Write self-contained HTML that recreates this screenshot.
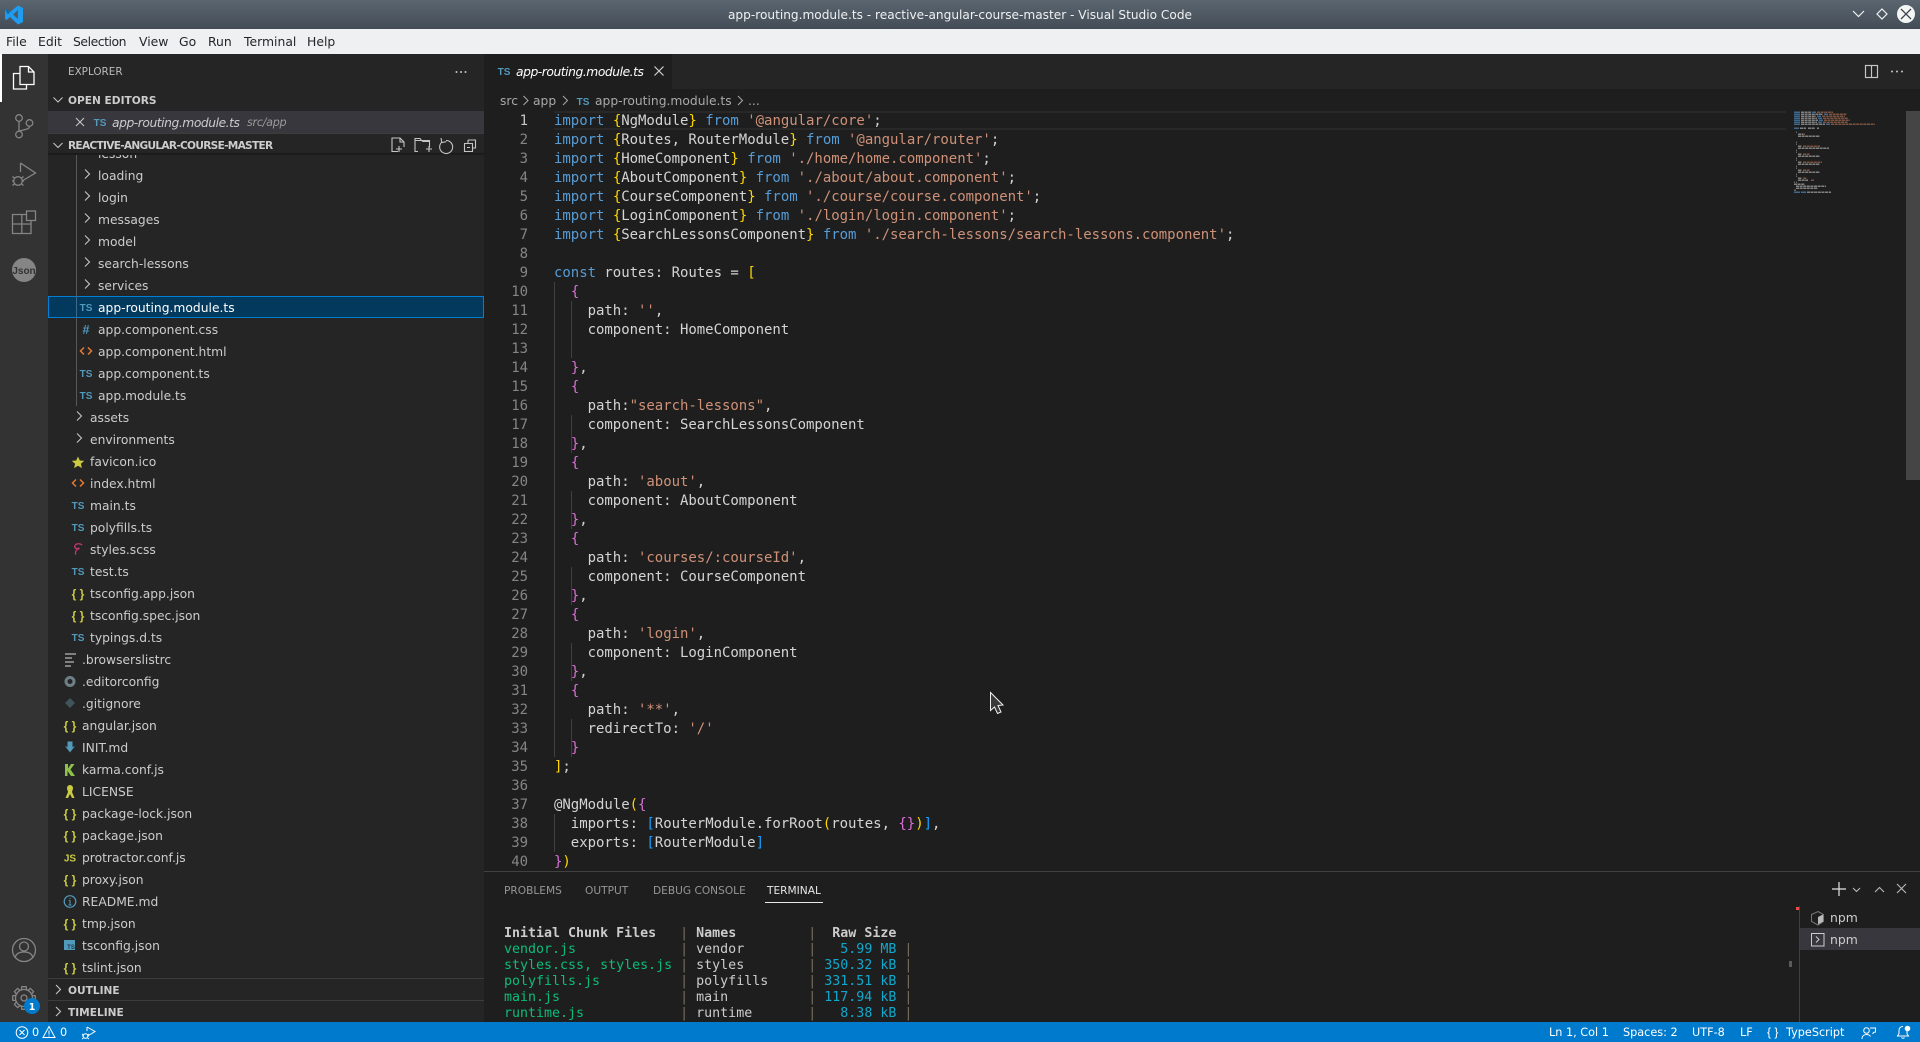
<!DOCTYPE html>
<html lang="en">
<head>
<meta charset="utf-8">
<title>app-routing.module.ts - reactive-angular-course-master - Visual Studio Code</title>
<style>
html,body{margin:0;padding:0;width:1920px;height:1042px;overflow:hidden;background:#1e1e1e}
body{font-family:"DejaVu Sans","Liberation Sans",sans-serif;position:relative;color:#ccc}
div,pre{box-sizing:border-box}
.a{position:absolute}
.t{position:absolute;white-space:nowrap}
#title{left:0;top:0;width:1920px;height:29px;background:linear-gradient(#5a6570,#444d56)}
#tt{left:0;width:1920px;top:1px;text-align:center;line-height:29px;font-size:12.15px;color:#eff0f1}
#menu{left:0;top:29px;width:1920px;height:25px;background:#eff0f1}
.m{top:29px;line-height:25px;font-size:12.4px;color:#232629}
#act{left:0;top:54px;width:48px;height:968px;background:#333}
#side{left:48px;top:54px;width:436px;height:968px;background:#252526}
.h{font-size:10.6px;font-weight:bold;color:#ccc;left:68px;line-height:20px}
#list{left:48px;top:155px;width:436px;height:823px;overflow:hidden}
.r{position:absolute;white-space:nowrap;font-size:12.3px;line-height:22px;height:22px;color:#ccc}
.d3{left:50px}.d2{left:42px}.d1{left:34px}
pre{margin:0;position:absolute}
#code,#nums{font-family:"DejaVu Sans Mono","Liberation Mono",monospace;font-size:14px;line-height:19px;letter-spacing:-.03px;color:#d4d4d4}
#code{left:554px;top:112px;height:759px;overflow:hidden;width:1000px}
#nums{left:488px;width:40px;top:112px;height:759px;overflow:hidden;text-align:right;color:#858585}
.k{color:#569cd6}.s{color:#ce9178}.g{color:#ffd700}.o{color:#da70d6}.b{color:#179fff}
#term{left:504px;top:926px;height:96px;overflow:hidden;font-family:"DejaVu Sans Mono","Liberation Mono",monospace;font-size:13.3px;line-height:16px;color:#ccc}
.gr{color:#0dbc79}.cy{color:#11a8cd}.p{color:#77705f}
.pt{top:881px;line-height:20px;font-size:10.6px;color:#969696}
.st{top:1023px;line-height:19px;font-size:11.25px;color:#fff}
.bc{top:91px;line-height:20px;font-size:12.3px;color:#a9a9a9}
</style>
</head>
<body>
<div class="a" id="title"></div>
<div class="t" id="tt">app-routing.module.ts - reactive-angular-course-master - Visual Studio Code</div>
<div class="a" id="menu"></div>
<div class="t m" style="left:6px">File</div>
<div class="t m" style="left:38px">Edit</div>
<div class="t m" style="left:73px;letter-spacing:-.45px">Selection</div>
<div class="t m" style="left:139px">View</div>
<div class="t m" style="left:179px">Go</div>
<div class="t m" style="left:208px">Run</div>
<div class="t m" style="left:244px">Terminal</div>
<div class="t m" style="left:307px">Help</div>

<div class="a" id="act"></div>
<div class="a" style="left:0;top:54px;width:2px;height:48px;background:#fff"></div>
<div class="a" id="side"></div>
<!-- tab bar -->
<div class="a" style="left:484px;top:54px;width:1436px;height:35px;background:#252526"></div>
<div class="a" style="left:484px;top:54px;width:188px;height:35px;background:#1e1e1e"></div>
<!-- current line highlight -->
<div class="a" style="left:554px;top:111px;width:1232px;height:19px;border:2px solid #282828;border-left:0;border-right:0"></div>
<div class="a" style="left:1906px;top:111px;width:14px;height:369px;background:#454545"></div>

<div class="t" style="left:68px;top:62px;line-height:20px;font-size:10.4px;color:#bbb">EXPLORER</div>
<div class="t h" style="top:91px">OPEN EDITORS</div>
<div class="a" style="left:48px;top:111px;width:436px;height:22px;background:#37373d"></div>
<div class="t" style="left:112px;top:112px;line-height:22px;font-size:12.3px;font-style:italic;letter-spacing:-.45px;color:#ccc">app-routing.module.ts</div>
<div class="t" style="left:247px;top:112px;line-height:22px;font-size:11.2px;font-style:italic;letter-spacing:-.3px;color:#9a9a9a">src/app</div>
<div class="a" style="left:48px;top:133px;width:436px;height:1px;background:#3c3c3c"></div>
<div class="t h" style="top:136px;letter-spacing:-.72px">REACTIVE-ANGULAR-COURSE-MASTER</div>

<div class="a" id="list">
<div class="a" style="left:28px;top:0;width:1px;height:251px;background:#585858"></div>
<div class="r d3" style="top:-12px">lesson</div>
<div class="r d3" style="top:10px">loading</div>
<div class="r d3" style="top:32px">login</div>
<div class="r d3" style="top:54px">messages</div>
<div class="r d3" style="top:76px">model</div>
<div class="r d3" style="top:98px">search-lessons</div>
<div class="r d3" style="top:120px">services</div>
<div class="a" style="left:0;top:141px;width:436px;height:22px;background:#04395e;border:1px solid #007fd4"></div>
<div class="a" style="left:28px;top:141px;width:1px;height:22px;background:#3b6a8a"></div>
<div class="r d3" style="top:142px;color:#fff">app-routing.module.ts</div>
<div class="r d3" style="top:164px">app.component.css</div>
<div class="r d3" style="top:186px">app.component.html</div>
<div class="r d3" style="top:208px">app.component.ts</div>
<div class="r d3" style="top:230px">app.module.ts</div>
<div class="r d2" style="top:252px">assets</div>
<div class="r d2" style="top:274px">environments</div>
<div class="r d2" style="top:296px">favicon.ico</div>
<div class="r d2" style="top:318px">index.html</div>
<div class="r d2" style="top:340px">main.ts</div>
<div class="r d2" style="top:362px">polyfills.ts</div>
<div class="r d2" style="top:384px">styles.scss</div>
<div class="r d2" style="top:406px">test.ts</div>
<div class="r d2" style="top:428px">tsconfig.app.json</div>
<div class="r d2" style="top:450px">tsconfig.spec.json</div>
<div class="r d2" style="top:472px">typings.d.ts</div>
<div class="r d1" style="top:494px">.browserslistrc</div>
<div class="r d1" style="top:516px">.editorconfig</div>
<div class="r d1" style="top:538px">.gitignore</div>
<div class="r d1" style="top:560px">angular.json</div>
<div class="r d1" style="top:582px">INIT.md</div>
<div class="r d1" style="top:604px">karma.conf.js</div>
<div class="r d1" style="top:626px">LICENSE</div>
<div class="r d1" style="top:648px">package-lock.json</div>
<div class="r d1" style="top:670px">package.json</div>
<div class="r d1" style="top:692px">protractor.conf.js</div>
<div class="r d1" style="top:714px">proxy.json</div>
<div class="r d1" style="top:736px">README.md</div>
<div class="r d1" style="top:758px">tmp.json</div>
<div class="r d1" style="top:780px">tsconfig.json</div>
<div class="r d1" style="top:802px">tslint.json</div>
</div>
<div class="a" style="left:48px;top:153px;width:436px;height:3px;background:linear-gradient(#00000066,#00000000)"></div>

<div class="a" style="left:48px;top:978px;width:436px;height:1px;background:#3c3c3c"></div>
<div class="t h" style="top:981px">OUTLINE</div>
<div class="a" style="left:48px;top:1000px;width:436px;height:1px;background:#3c3c3c"></div>
<div class="t h" style="top:1003px">TIMELINE</div>

<!-- tab + breadcrumbs -->
<div class="t" style="left:516px;top:62px;line-height:20px;font-size:12.3px;font-style:italic;letter-spacing:-.45px;color:#fff">app-routing.module.ts</div>
<div class="t bc" style="left:500px">src</div>
<div class="t bc" style="left:533px">app</div>
<div class="t bc" style="left:595px">app-routing.module.ts</div>
<div class="t bc" style="left:748px">...</div>

<pre id="nums"><span style="color:#c6c6c6">1</span>
2
3
4
5
6
7
8
9
10
11
12
13
14
15
16
17
18
19
20
21
22
23
24
25
26
27
28
29
30
31
32
33
34
35
36
37
38
39
40</pre>
<pre id="code"><span class="k">import</span> <span class="g">{</span>NgModule<span class="g">}</span> <span class="k">from</span> <span class="s">'@angular/core'</span>;
<span class="k">import</span> <span class="g">{</span>Routes, RouterModule<span class="g">}</span> <span class="k">from</span> <span class="s">'@angular/router'</span>;
<span class="k">import</span> <span class="g">{</span>HomeComponent<span class="g">}</span> <span class="k">from</span> <span class="s">'./home/home.component'</span>;
<span class="k">import</span> <span class="g">{</span>AboutComponent<span class="g">}</span> <span class="k">from</span> <span class="s">'./about/about.component'</span>;
<span class="k">import</span> <span class="g">{</span>CourseComponent<span class="g">}</span> <span class="k">from</span> <span class="s">'./course/course.component'</span>;
<span class="k">import</span> <span class="g">{</span>LoginComponent<span class="g">}</span> <span class="k">from</span> <span class="s">'./login/login.component'</span>;
<span class="k">import</span> <span class="g">{</span>SearchLessonsComponent<span class="g">}</span> <span class="k">from</span> <span class="s">'./search-lessons/search-lessons.component'</span>;

<span class="k">const</span> routes: Routes = <span class="g">[</span>
  <span class="o">{</span>
    path: <span class="s">''</span>,
    component: HomeComponent

  <span class="o">}</span>,
  <span class="o">{</span>
    path:<span class="s">"search-lessons"</span>,
    component: SearchLessonsComponent
  <span class="o">}</span>,
  <span class="o">{</span>
    path: <span class="s">'about'</span>,
    component: AboutComponent
  <span class="o">}</span>,
  <span class="o">{</span>
    path: <span class="s">'courses/:courseId'</span>,
    component: CourseComponent
  <span class="o">}</span>,
  <span class="o">{</span>
    path: <span class="s">'login'</span>,
    component: LoginComponent
  <span class="o">}</span>,
  <span class="o">{</span>
    path: <span class="s">'**'</span>,
    redirectTo: <span class="s">'/'</span>
  <span class="o">}</span>
<span class="g">]</span>;

@NgModule<span class="g">(</span><span class="o">{</span>
  imports: <span class="b">[</span>RouterModule.forRoot<span class="g">(</span>routes, <span class="o">{}</span><span class="g">)</span><span class="b">]</span>,
  exports: <span class="b">[</span>RouterModule<span class="b">]</span>
<span class="o">}</span><span class="g">)</span></pre>

<!-- panel -->
<div class="a" style="left:484px;top:871px;width:1436px;height:151px;background:#1e1e1e;border-top:1px solid #414141"></div>
<div class="t pt" style="left:504px">PROBLEMS</div>
<div class="t pt" style="left:585px">OUTPUT</div>
<div class="t pt" style="left:653px">DEBUG CONSOLE</div>
<div class="t pt" style="left:767px;color:#e7e7e7">TERMINAL</div>
<div class="a" style="left:765px;top:902px;width:58px;height:1px;background:#e7e7e7"></div>
<pre id="term" class="a"><b>Initial Chunk Files</b>   <span class="p">|</span> <b>Names</b>         <span class="p">|</span>  <b>Raw Size</b>
<span class="gr">vendor.js</span>             <span class="p">|</span> vendor        <span class="p">|</span>   <span class="cy">5.99 MB</span> <span class="p">|</span>
<span class="gr">styles.css, styles.js</span> <span class="p">|</span> styles        <span class="p">|</span> <span class="cy">350.32 kB</span> <span class="p">|</span>
<span class="gr">polyfills.js</span>          <span class="p">|</span> polyfills     <span class="p">|</span> <span class="cy">331.51 kB</span> <span class="p">|</span>
<span class="gr">main.js</span>               <span class="p">|</span> main          <span class="p">|</span> <span class="cy">117.94 kB</span> <span class="p">|</span>
<span class="gr">runtime.js</span>            <span class="p">|</span> runtime       <span class="p">|</span>   <span class="cy">8.38 kB</span> <span class="p">|</span></pre>
<div class="a" style="left:1799px;top:906px;width:1px;height:116px;background:#414141"></div>
<div class="a" style="left:1800px;top:928px;width:120px;height:22px;background:#37373d"></div>
<div class="a" style="left:1796px;top:907px;width:3px;height:3px;background:#f14c4c"></div>
<div class="a" style="left:1789px;top:961px;width:3px;height:6px;background:#5a5a5a"></div>
<div class="t" style="left:1830px;top:907px;line-height:22px;font-size:12.4px;color:#ccc">npm</div>
<div class="t" style="left:1830px;top:929px;line-height:22px;font-size:12.4px;color:#ccc">npm</div>

<!-- status bar -->
<div class="a" style="left:0;top:1022px;width:1920px;height:20px;background:#007acc"></div>
<div class="t st" style="left:32px">0</div>
<div class="t st" style="left:60px">0</div>
<div class="t st" style="left:1549px">Ln 1, Col 1</div>
<div class="t st" style="left:1623px">Spaces: 2</div>
<div class="t st" style="left:1692px">UTF-8</div>
<div class="t st" style="left:1740px">LF</div>
<div class="t st" style="left:1767px;font-family:'Liberation Sans',sans-serif;font-size:12px">{ }</div>
<div class="t st" style="left:1786px">TypeScript</div>

<!-- icons overlay -->
<svg class="a" style="left:0;top:0;pointer-events:none" width="1920" height="1042" viewBox="0 0 1920 1042" xmlns="http://www.w3.org/2000/svg" fill="none">
<!-- vscode logo -->
<path d="M18 5.500L23 8v14l-5 2.500L10 17l-3.500 3L5 19v-9l1.500-1L10 12z" fill="#1f9cf0"/>
<path d="M18 10v9l-5-4.500z" fill="#4f5a64"/>
<path d="M5 10l1.500-1 3.500 3-2 2.500z" fill="#0a6fb5"/>
<!-- window buttons -->
<path d="M1853 11l5.500 5.500 5.500-5.500" stroke="#eff0f1" stroke-width="1.200"/>
<path d="M1882 9l5 5-5 5-5-5z" stroke="#eff0f1" stroke-width="1.200"/>
<circle cx="1906" cy="14" r="9" fill="#f4f5f5"/>
<path d="M1901 9l10 10M1911 9l-10 10" stroke="#3a424a" stroke-width="1.300"/>

<!-- activity icons -->
<g stroke="#fff" stroke-width="1.300">
<path d="M20 73.500h-6.500v15.500h13v-4.500"/>
<path d="M20 66.500h8.500l5.500 5.500v12.500h-14z"/>
<path d="M28.500 66.500v5.500h5.500"/>
</g>
<g stroke="#858585" stroke-width="1.300">
<circle cx="19" cy="118" r="3.300"/><circle cx="19" cy="134.500" r="3.300"/><circle cx="29.500" cy="123" r="3.300"/>
<path d="M19 121.300v9.900M29.500 126.300c0 3.500-6 3-10.500 5"/>
<path d="M20.500 163l15 10-13.500 8M20.500 163v9"/>
<circle cx="18" cy="181" r="4.300"/>
<path d="M12.500 176.500l2.500 2M23.500 176.500l-2.500 2M12 181h2M22 181h2M12.500 185.500l2.500-2M23.500 185.500l-2.500-2"/>
<path d="M12.500 214.500h18.500v19h-18.500zM12.500 224h18.500M21.800 214.500v19"/>
<rect x="26.500" y="211" width="9" height="9.500" fill="#333"/>
<circle cx="24" cy="950" r="11.500"/>
<circle cx="24" cy="946.500" r="4.500"/>
<path d="M15 958c1-5 5-6 9-6s8 1 9 6"/>
<g transform="translate(24 998)">
<circle r="8.500"/>
<circle r="3"/>
<path d="M8.100 -2.600L11.300 -2.200V2.200L8.100 2.600"/>
<path d="M8.100 -2.600L11.300 -2.200V2.200L8.100 2.600" transform="rotate(45)"/>
<path d="M8.100 -2.600L11.300 -2.200V2.200L8.100 2.600" transform="rotate(90)"/>
<path d="M8.100 -2.600L11.300 -2.200V2.200L8.100 2.600" transform="rotate(135)"/>
<path d="M8.100 -2.600L11.300 -2.200V2.200L8.100 2.600" transform="rotate(180)"/>
<path d="M8.100 -2.600L11.300 -2.200V2.200L8.100 2.600" transform="rotate(225)"/>
<path d="M8.100 -2.600L11.300 -2.200V2.200L8.100 2.600" transform="rotate(270)"/>
<path d="M8.100 -2.600L11.300 -2.200V2.200L8.100 2.600" transform="rotate(315)"/>
</g>
</g>
<circle cx="24" cy="270" r="12" fill="#858585"/>
<text x="24" y="274" text-anchor="middle" font-family="Liberation Sans,sans-serif" font-size="10" font-weight="bold" fill="#333">Json</text>
<circle cx="32" cy="1006" r="8" fill="#007acc"/>
<text x="32" y="1010" text-anchor="middle" font-family="DejaVu Sans,sans-serif" font-size="9.500" font-weight="bold" fill="#fff">1</text>

<!-- explorer dots + chevrons -->
<g fill="#c5c5c5"><circle cx="456.500" cy="72" r="1"/><circle cx="461" cy="72" r="1"/><circle cx="465.500" cy="72" r="1"/></g>
<g stroke="#c5c5c5" stroke-width="1.100">
<path d="M53.500 97.500l4.500 4.500 4.500-4.500M53.500 143l4.500 4.500 4.500-4.500"/>
<path d="M76 118l8 8M84 118l-8 8"/>
<path d="M56 985l4.500 4.500-4.500 4.500M56 1007l4.500 4.500-4.500 4.500"/>
<!-- toolbar -->
<path d="M398 151.500h-6v-13.500h8l4 4v5M400 138v4h4M402 149h-6M399 146v6"/>
<path d="M418 151.500h-3v-13h5l1.500 2h8v7M415 140.500h6.500l1.500 1h6.500M426 149h6M429 146v6"/>
<path d="M442 142a6.500 6.500 0 1 0 4-1.500M441 138l.8 4.500 4.500-.8"/>
<path d="M468 140h7.500v8h-3M464.500 143.500h8v8h-8zM467 147.500h3M468 143.500v-3.500"/>
<!-- folder chevrons -->
<path d="M85 169.500l4.500 4.500-4.500 4.500M85 191.500l4.500 4.500-4.500 4.500M85 213.500l4.500 4.500-4.500 4.500M85 235.500l4.500 4.500-4.500 4.500M85 257.500l4.500 4.500-4.500 4.500M85 279.500l4.500 4.500-4.500 4.500M77 411.500l4.500 4.500-4.500 4.500M77 433.500l4.500 4.500-4.500 4.500"/>
</g>

<!-- file icons -->
<g font-family="Liberation Sans,sans-serif" font-weight="bold" font-size="10" fill="#519aba" text-anchor="middle">
<text x="100" y="126">TS</text>
<text x="86" y="311">TS</text>
<text x="86" y="377">TS</text>
<text x="86" y="399">TS</text>
<text x="78" y="509">TS</text>
<text x="78" y="531">TS</text>
<text x="78" y="575">TS</text>
<text x="78" y="641">TS</text>
<text x="504" y="75">TS</text>
<text x="583" y="105">TS</text>
<text x="86" y="334" font-size="12.500">#</text>
</g>
<g font-family="Liberation Sans,sans-serif" font-weight="bold" font-size="12" fill="#cbcb41" text-anchor="middle">
<text x="78" y="598">{ }</text>
<text x="78" y="620">{ }</text>
<text x="70" y="730">{ }</text>
<text x="70" y="818">{ }</text>
<text x="70" y="840">{ }</text>
<text x="70" y="884">{ }</text>
<text x="70" y="928">{ }</text>
<text x="70" y="972">{ }</text>
</g>
<text x="70" y="861.500" font-family="Liberation Sans,sans-serif" font-weight="bold" font-size="10" fill="#cbcb41" text-anchor="middle">JS</text>
<g stroke="#e37933" stroke-width="1.500">
<path d="M84 347.500l-3.500 3.500 3.500 3.500M88 347.500l3.500 3.500-3.500 3.500"/>
<path d="M76 479.500l-3.500 3.500 3.500 3.500M80 479.500l3.500 3.500-3.500 3.500"/>
</g>
<path d="M78 456.500l1.800 4 4.400.4-3.300 2.900 1 4.300-3.900-2.300-3.900 2.300 1-4.300-3.300-2.900 4.400-.4z" fill="#cbcb41"/>
<path d="M82 545c-2-2-6-1.500-7 .5s1 3.500 3 3.500 1-2-1 .5c-1.500 2-2 4-1 5" stroke="#c6386f" stroke-width="1.300"/>
<path d="M65 654h11M65 658h7M65 662h9M65 666h6" stroke="#b8b8b8" stroke-width="1.200"/>
<circle cx="70" cy="681.500" r="4" stroke="#6d8086" stroke-width="3"/>
<path d="M70 698l5 5-5 5-5-5z" fill="#41535b"/>
<path d="M65 746l2.500 1v-5.500h5v5.500l2.500-1-5 6.500z" fill="#519aba"/>
<path d="M65 764v12h2.500v-5l3.500 5h4l-4.500-6.500 4-5.500h-3.500l-3 4.500v-4.500z" fill="#8dc149"/>
<path d="M70 785a3 3 0 0 1 3 3c0 2-1 3-1 4l2.500 6h-2.500l-2-4-2 4h-2.500l2.500-6c0-1-1-2-1-4a3 3 0 0 1 3-3z" fill="#cbcb41"/>
<circle cx="70" cy="901.500" r="5.800" stroke="#519aba" stroke-width="1.200"/>
<path d="M70 900.500v4.500M68.500 905h3M68.800 900.500h1.500M70 898v1" stroke="#519aba" stroke-width="1"/>
<rect x="64" y="940" width="11" height="10" fill="#519aba"/>
<text x="71" y="949" text-anchor="middle" font-family="Liberation Sans,sans-serif" font-size="6" font-weight="bold" fill="#1e3a4a">TS</text>

<!-- tab close, split, dots -->
<path d="M654.500 66.500l9 9M663.500 66.500l-9 9" stroke="#d0d0d0" stroke-width="1.200"/>
<rect x="1865.500" y="65.500" width="12" height="12" stroke="#c5c5c5" stroke-width="1.200"/>
<path d="M1871.500 65.500v12" stroke="#c5c5c5" stroke-width="1.200"/>
<g fill="#c5c5c5"><circle cx="1892" cy="71.500" r="1"/><circle cx="1897" cy="71.500" r="1"/><circle cx="1902" cy="71.500" r="1"/></g>
<!-- breadcrumb chevrons -->
<path d="M523.500 96l4.500 4.500-4.500 4.500M563 96l4.500 4.500-4.500 4.500M738 96l4.500 4.500-4.500 4.500" stroke="#a9a9a9" stroke-width="1"/>

<!-- indent guides -->
<g stroke="#404040" stroke-width="1">
<path d="M554.500 282v475M554.500 814v38"/>
<path d="M571.500 301v57M571.500 415v38M571.500 491v38M571.500 567v38M571.500 643v38M571.500 719v38"/>
</g>

<!-- minimap -->
<g stroke-width="1.100" opacity=".9" transform="translate(0 .2)">
<path stroke="#4f8cc4" d="M1794 112h6M1794 114h6M1794 116h6M1794 118h6M1794 120h6M1794 122h6M1794 124h6M1812 112h4M1824 114h4M1817 116h4M1818 118h4M1819 120h4M1818 122h4M1826 124h4M1794 128h5M1794 192h6M1801 192h5"/>
<path stroke="#b0b0b0" stroke-dasharray="3 .6" d="M1801 112h10M1801 114h22M1801 116h15M1801 118h16M1801 120h17M1801 122h16M1801 124h24M1800 128h6M1808 128h7M1817 128h2M1798 134h5M1798 136h22M1798 146h4M1798 148h31M1798 154h4M1798 156h22M1798 162h4M1798 164h22M1798 170h4M1798 172h22M1798 178h4M1798 180h10M1794 184h11M1796 186h30M1796 188h22M1807 192h24"/>
<path stroke="#a86e53" stroke-dasharray="3 .6" d="M1817 112h16M1829 114h18M1822 116h23M1823 118h25M1824 120h26M1823 122h25M1831 124h44M1803 134h2M1803 146h17M1803 154h7M1803 162h19M1803 170h7M1803 178h4M1811 180h3"/>
<path stroke="#8a8a8a" d="M1796 132h1M1796 142h1M1796 144h1M1796 150h1M1796 152h1M1796 158h1M1796 160h1M1796 166h1M1796 168h1M1796 174h1M1796 176h1M1796 182h1M1794 182h1M1794 190h2"/>
</g>

<!-- mouse pointer -->
<path d="M990.500 692.500v18l4-3.500 3 6.500 3.500-1.500-3-6.500 5-.5z" fill="#3a3a3a" stroke="#f0f0f0" stroke-width="1"/>

<!-- panel right icons -->
<path d="M1839 882v14M1832 889h14" stroke="#e5e5e5" stroke-width="1.200"/>
<path d="M1853 888l3.500 3.500 3.500-3.500M1875 892l4.500-4.500 4.500 4.500M1897 884l9 9M1906 884l-9 9" stroke="#b8b8b8" stroke-width="1.100"/>
<path d="M1818 911.500l5.500 3v7l-5.500 3.500-6.500-3.500v-7z" stroke="#777" stroke-width="1"/>
<path d="M1818 917l5-2.500v7l-5 3z" fill="#bbb"/>
<rect x="1811.500" y="933.500" width="12.500" height="12.500" stroke="#ccc" stroke-width="1"/>
<path d="M1816 936.500l3 3-3 3" stroke="#ccc" stroke-width="1"/>

<!-- status icons -->
<g stroke="#fff" stroke-width="1">
<circle cx="22" cy="1032.500" r="5.800"/>
<path d="M19.500 1030l5 5M24.500 1030l-5 5"/>
<path d="M49 1026.500l6 11h-12zM49 1030.500v4M49 1035.500v1"/>
<path d="M87 1027l8 4.500-6.500 4M87 1027v4"/>
<circle cx="85.500" cy="1036" r="2.300"/>
<path d="M82 1034l1.500 1M89 1034l-1.500 1M82 1036h1M88 1036h1M82 1039l1.500-1M89 1039l-1.500-1"/>
<circle cx="1866.500" cy="1030.500" r="2.800"/>
<path d="M1862 1039c0-3 2-4.500 4.500-4.500s3.500 1 4 2M1870 1028h5.500v4l-2 .5-1 1.500"/>
<path d="M1903 1026.500c-3 0-4 2-4 4.500v2.500l-1.500 2.500h11l-1.500-2.500v-2.500M1901.500 1037.500a1.800 1.800 0 0 0 3 0"/>
</g>
<circle cx="1907.500" cy="1028.500" r="2.800" fill="#fff"/>
</svg>
</body>
</html>
